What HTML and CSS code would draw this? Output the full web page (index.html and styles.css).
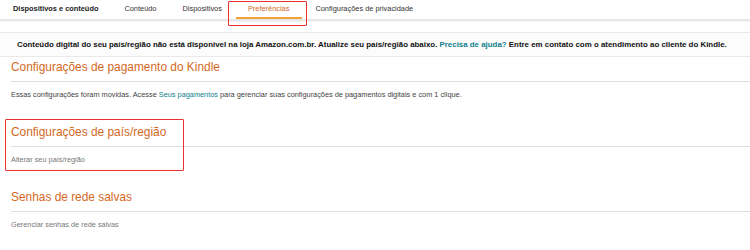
FILE: index.html
```html
<!DOCTYPE html>
<html lang="pt-BR">
<head>
<meta charset="utf-8">
<link rel="stylesheet" href="styles.css">
</head>
<body>
<nav class="tabs">
  <span class="tab tab-title">Dispositivos e conteúdo</span>
  <span class="tab">Conteúdo</span>
  <span class="tab">Dispositivos</span>
  <span class="tab tab-active">Preferências<span class="mark mark-tab"></span></span>
  <span class="tab">Configurações de privacidade</span>
</nav>
<div class="banner">Conteúdo digital do seu país/região não está disponivel na loja Amazon.com.br. Atualize seu país/região abaixo. <a class="link">Precisa de ajuda?</a> Entre em contato com o atendimento ao cliente do Kindle.</div>
<section class="sec sec-first">
  <h2 class="sec-title">Configurações de pagamento do Kindle</h2>
  <p class="sec-text dark">Essas configurações foram movidas. Acesse <a class="link">Seus pagamentos</a> para gerenciar suas configurações de pagamentos digitais e com 1 clique.</p>
</section>
<section class="sec">
  <span class="mark mark-sec"></span>
  <h2 class="sec-title">Configurações de país/região</h2>
  <p class="sec-text">Alterar seu país/região</p>
</section>
<section class="sec">
  <h2 class="sec-title">Senhas de rede salvas</h2>
  <p class="sec-text">Gerenciar senhas de rede salvas</p>
</section>
</body>
</html>
```
FILE: styles.css
```css
* { box-sizing: border-box; }
html, body { margin: 0; padding: 0; background: #fff; }
body { font-family: "Liberation Sans", Arial, sans-serif; color: #333; width: 750px; height: 250px; overflow: hidden; }

.tabs {
  display: flex;
  height: 21px;
  border-bottom: 2px solid #e6e6e6;
  box-shadow: 0 1px 1px rgba(0,0,0,0.04);
}
.tab {
  position: relative;
  padding: 0 13px;
  font-size: 7.4px;
  line-height: 18px;
  color: #333;
  white-space: nowrap;
}
.tab-title { font-weight: bold; color: #222; }
.tab-active { color: #d4691e; }
.tab-active::after {
  content: "";
  position: absolute;
  left: 1px; right: 0; bottom: 0;
  height: 2px;
  background: #f0a23a;
}
.mark { position: absolute; border: 1.5px solid #e8322f; border-radius: 1px; pointer-events: none; }
.mark-tab { left: -7px; right: -5px; top: 1px; height: 25px; }

.banner {
  margin-top: 11px;
  height: 25px;
  border-top: 1px solid #e9e9e9;
  border-bottom: 1px solid #e9e9e9;
  background: #fcfcfc;
  padding-left: 17px;
  font-size: 7.9px;
  font-weight: bold;
  line-height: 23px;
  color: #111;
  white-space: nowrap;
}
.link { color: #0f7f8c; text-decoration: none; }

.sec { position: relative; margin: 24px 0 0 11px; }
.sec-first { margin-top: 2px; }
.sec-title {
  margin: 0;
  font-size: 11.9px;
  font-weight: normal;
  line-height: 16px;
  color: #d4691e;
  padding-bottom: 6px;
  border-bottom: 1.5px solid #dedede;
}
.sec-text {
  margin: 8px 0 0;
  font-size: 7.35px;
  line-height: 10px;
  color: #777;
  white-space: nowrap;
}
.sec-text.dark { color: #444; }
.mark-sec { left: -6px; width: 179px; top: -5px; height: 52px; }
```
